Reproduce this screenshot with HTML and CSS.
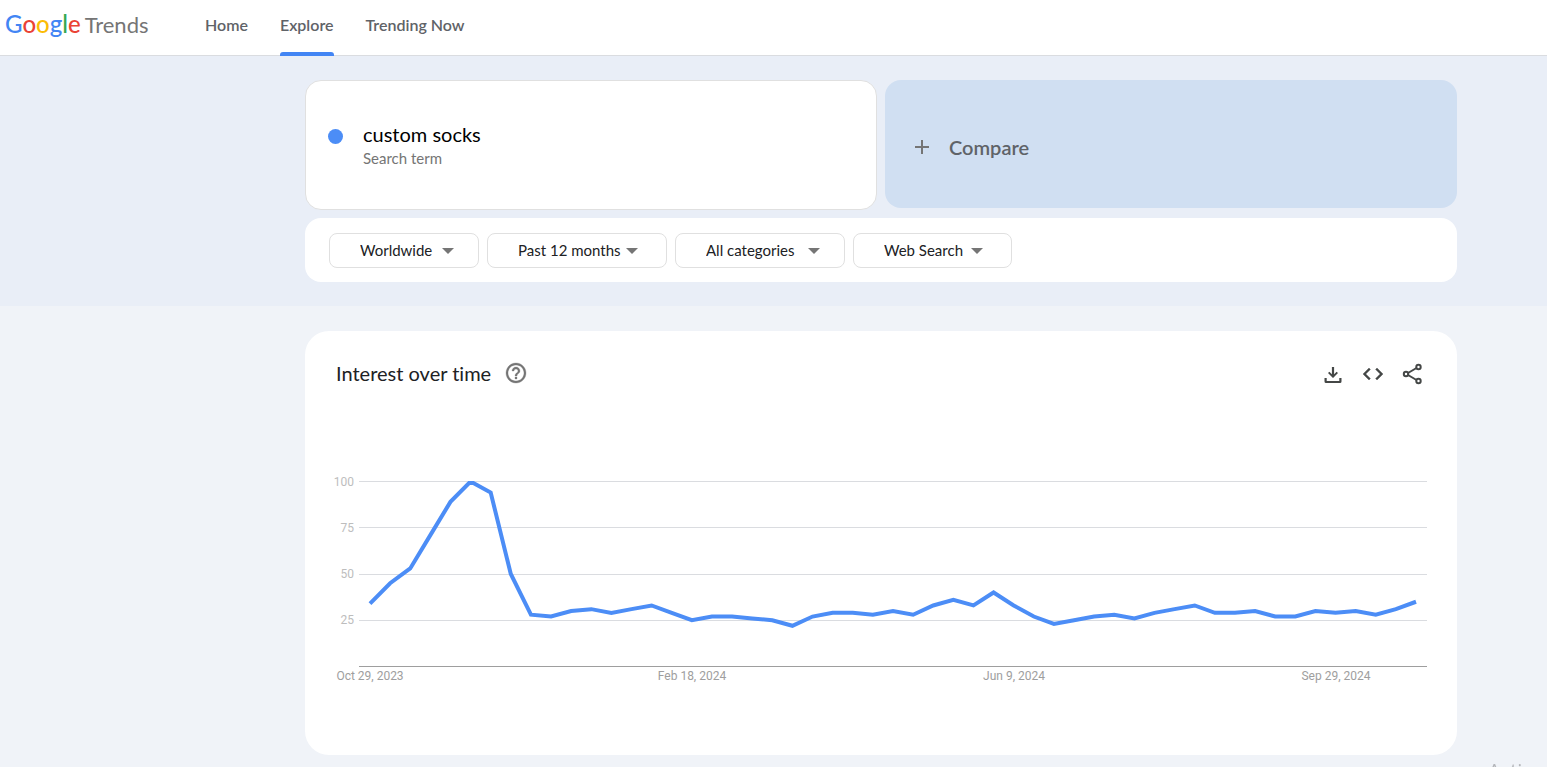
FILE: index.html
```html
<!DOCTYPE html>
<html lang="en">
<head>
<meta charset="utf-8">
<title>custom socks - Explore - Google Trends</title>
<link rel="stylesheet" href="styles.css">
</head>
<body>
<header class="topbar">
  <a class="logo" href="#" aria-label="Google Trends">
    <span class="logo-google"><span class="blue">G</span><span class="red">o</span><span class="yellow">o</span><span class="blue">g</span><span class="green">l</span><span class="red">e</span></span>
    <span class="logo-trends">Trends</span>
  </a>
  <nav class="nav">
    <a class="nav-link" href="#">Home</a>
    <a class="nav-link active" href="#" aria-current="page">Explore</a>
    <a class="nav-link" href="#">Trending Now</a>
  </nav>
</header>
<main>
  <section class="query">
    <div class="terms">
      <div class="term">
        <span class="dot"></span>
        <div>
          <div class="term-name">custom socks</div>
          <div class="term-type">Search term</div>
        </div>
      </div>
      <button class="compare" type="button">
        <svg class="plus" viewBox="0 0 14 14" aria-hidden="true"><path d="M6 0h2v6h6v2H8v6H6V8H0V6h6z"/></svg>
        <span>Compare</span>
      </button>
    </div>
    <div class="filters">
      <div class="filter region">
        <select aria-label="Region"><option>Worldwide</option></select>
        <svg class="caret" viewBox="0 0 12 6" aria-hidden="true"><path d="M0 0h12L6 6z"/></svg>
      </div>
      <div class="filter period">
        <select aria-label="Time range"><option>Past 12 months</option></select>
        <svg class="caret" viewBox="0 0 12 6" aria-hidden="true"><path d="M0 0h12L6 6z"/></svg>
      </div>
      <div class="filter category">
        <select aria-label="Category"><option>All categories</option></select>
        <svg class="caret" viewBox="0 0 12 6" aria-hidden="true"><path d="M0 0h12L6 6z"/></svg>
      </div>
      <div class="filter source">
        <select aria-label="Search type"><option>Web Search</option></select>
        <svg class="caret" viewBox="0 0 12 6" aria-hidden="true"><path d="M0 0h12L6 6z"/></svg>
      </div>
    </div>
  </section>
  <section class="card">
    <div class="card-head">
      <h1 class="card-title">Interest over time</h1>
      <button class="icon help" type="button" aria-label="Help">
        <svg viewBox="0 0 24 24"><path d="M11 18h2v-2h-2v2zm1-16C6.480 2 2 6.480 2 12s4.480 10 10 10 10-4.480 10-10S17.520 2 12 2zm0 18c-4.410 0-8-3.590-8-8s3.590-8 8-8 8 3.590 8 8-3.590 8-8 8zm0-14c-2.210 0-4 1.790-4 4h2c0-1.100.9-2 2-2s2 .9 2 2c0 2-3 1.750-3 5h2c0-2.250 3-2.500 3-5 0-2.210-1.790-4-4-4z" stroke="currentColor" stroke-width=".3"/></svg>
      </button>
      <div class="actions">
        <button class="icon" type="button" aria-label="Download CSV">
          <svg viewBox="0 0 24 24"><path d="M10.900 5h2.200v7.200l2.500-2.500L17 11.100l-5 5-5-5 1.400-1.400 2.500 2.500zM3.500 16h2.200v3h12.600v-3h2.200v3.500a1.500 1.500 0 0 1-1.500 1.500H5a1.500 1.500 0 0 1-1.500-1.500z"/></svg>
        </button>
        <button class="icon" type="button" aria-label="Embed">
          <svg viewBox="0 0 24 24"><path d="M9.400 16.600L4.800 12l4.600-4.600L8 6l-6 6 6 6 1.400-1.400zm5.200 0l4.600-4.600-4.600-4.600L16 6l6 6-6 6-1.400-1.400z" stroke="currentColor" stroke-width=".4"/></svg>
        </button>
        <button class="icon" type="button" aria-label="Share">
          <svg viewBox="0 0 24 24"><g fill="none" stroke="currentColor" stroke-width="2"><circle cx="5" cy="12" r="2.200"/><circle cx="17.500" cy="5" r="2.200"/><circle cx="17.500" cy="19" r="2.200"/><path d="M7 11l8.500-5M7 13l8.500 5"/></g></svg>
        </button>
      </div>
    </div>
    <svg class="chart" viewBox="0 0 1102 216" role="img" aria-label="Interest over time for custom socks">
      <g class="gridlines">
        <path d="M29 11.500H1097M29 57.500H1097M29 104.500H1097M29 150.500H1097"/>
        <path class="axis" d="M29 196.500H1097"/>
      </g>
      <g class="y-labels">
        <text x="24" y="16">100</text>
        <text x="24" y="62">75</text>
        <text x="24" y="108">50</text>
        <text x="24" y="154">25</text>
      </g>
      <g class="x-labels">
        <text x="40" y="210">Oct 29, 2023</text>
        <text x="362" y="210">Feb 18, 2024</text>
        <text x="684" y="210">Jun 9, 2024</text>
        <text x="1006" y="210">Sep 29, 2024</text>
      </g>
      <clipPath id="plot"><path d="M29 11H1097V197H29z"/></clipPath>
      <g clip-path="url(#plot)"><polyline class="series" id="series"/></g>
    </svg>
  </section>
</main>
<div class="watermark">Acti</div>
<script src="chart.js"></script>
</body>
</html>
```

FILE: styles.css
```css
* { box-sizing: border-box; }
body {
  margin: 0;
  min-height: 100vh;
  background: #f0f3f8;
  font-family: Lato, sans-serif;
  font-variant-ligatures: none;
  color: #202124;
}
button { border: 0; padding: 0; background: none; font: inherit; color: inherit; cursor: pointer; }
a { color: inherit; text-decoration: none; }
svg { display: block; fill: currentColor; }

.topbar {
  display: flex;
  height: 56px;
  padding-left: 5px;
  background: #fff;
  border-bottom: 1px solid #dadce0;
}
.logo {
  display: flex;
  align-items: baseline;
  gap: 4px;
  width: 184px;
  padding-top: 8px;
  line-height: 32px;
  color: #757575;
}
.logo-google { font-size: 24px; font-weight: 500; }
.logo-trends { font-size: 22px; }
.blue { color: #4285f4; }
.red { color: #ea4335; }
.yellow { color: #fbbc05; }
.green { color: #34a853; }
.nav { display: flex; gap: 32px; margin-left: 16px; }
.nav-link {
  height: 56px;
  font-size: 16px;
  font-weight: 600;
  line-height: 50px;
  color: #5f6368;
}
.nav-link.active {
  position: relative;
}
.nav-link.active::after {
  content: "";
  position: absolute;
  left: 0;
  right: 0;
  bottom: 0;
  height: 4px;
  background: #4285f4;
  border-radius: 3px 3px 0 0;
}

.query {
  padding: 24px 90px 24px 305px;
  background: #e9eef7;
}
.terms { display: grid; grid-template-columns: 1fr 1fr; gap: 8px; align-items: start; }
.term {
  display: flex;
  gap: 20px;
  height: 130px;
  padding: 40px 22px 0;
  background: #fff;
  border: 1px solid #e0e0e0;
  border-radius: 16px;
}
.dot { width: 15px; height: 15px; margin-top: 8px; border-radius: 50%; background: #4c8df6; }
.term-name { font-size: 20px; line-height: 26px; color: #000; }
.term-type { font-size: 15px; line-height: 22px; color: #757575; }
.compare {
  display: flex;
  align-items: center;
  gap: 20px;
  height: 128px;
  padding: 5px 30px 0;
  background: #d0dff2;
  border-radius: 16px;
  font-size: 20px;
  font-weight: 600;
  color: #5f6368;
}
.plus { width: 14px; height: 14px; color: #757575; }

.filters {
  display: flex;
  gap: 8px;
  margin-top: 8px;
  padding: 15px 24px 14px;
  background: #fff;
  border-radius: 16px;
}
.filter { display: grid; align-items: center; height: 35px; }
.filter select {
  grid-area: 1 / 1;
  width: 100%;
  height: 100%;
  padding: 0 0 2px 30px;
  appearance: none;
  background: #fff;
  border: 1px solid #e0e0e0;
  border-radius: 8px;
  font: 15px Lato, sans-serif;
  color: #202124;
}
.caret {
  grid-area: 1 / 1;
  justify-self: end;
  width: 12px;
  height: 6px;
  margin-right: 25px;
  color: #757575;
  pointer-events: none;
}
.region { width: 150px; }
.period { width: 180px; }
.category { width: 170px; }
.source { width: 159px; }
.period .caret, .source .caret { margin-right: 29px; }

.card {
  margin: 25px 90px 12px 305px;
  padding: 30px 25px 69px;
  background: #fff;
  border-radius: 24px;
}
.card-head { display: flex; align-items: center; height: 24px; padding: 0 7px 0 6px; }
.card-title { margin: 0 13px 0 0; font-size: 20px; font-weight: 400; line-height: 24px; }
.icon { width: 24px; height: 24px; color: #444746; }
.help { color: #757575; }
.actions { display: flex; gap: 16px; margin-left: auto; padding-top: 1px; }

.chart { width: 100%; margin-top: 85px; font: 12px Roboto, sans-serif; }
.gridlines { fill: none; stroke: #dadce0; stroke-width: 1; }
.axis { stroke: #9e9e9e; }
.y-labels { fill: #bdbdbd; text-anchor: end; }
.x-labels { fill: #9e9e9e; text-anchor: middle; }
.series { fill: none; stroke: #4c8df6; stroke-width: 4; }

.watermark {
  position: fixed;
  right: 0;
  bottom: 0;
  width: 59px;
  height: 8px;
  overflow: hidden;
  font: 20px/24px "Open Sans", sans-serif;
  color: #b4b6ba;
}
```

FILE: chart.js
```js
const values = [
  34, 45, 53, 71, 89, 100, 94, 50, 28, 27, 30, 31, 29, 31, 33, 29, 25, 27,
  27, 26, 25, 22, 27, 29, 29, 28, 30, 28, 33, 36, 33, 40, 33, 27, 23, 25,
  27, 28, 26, 29, 31, 33, 29, 29, 30, 27, 27, 30, 29, 30, 28, 31, 35
];
const left = 40, right = 1086, base = 196.5, top100 = 11.5;
const step = (right - left) / (values.length - 1);
document.getElementById('series').setAttribute('points', values
  .map((v, i) => `${left + i * step},${base - v * (base - top100) / 100}`)
  .join(' '));
```
